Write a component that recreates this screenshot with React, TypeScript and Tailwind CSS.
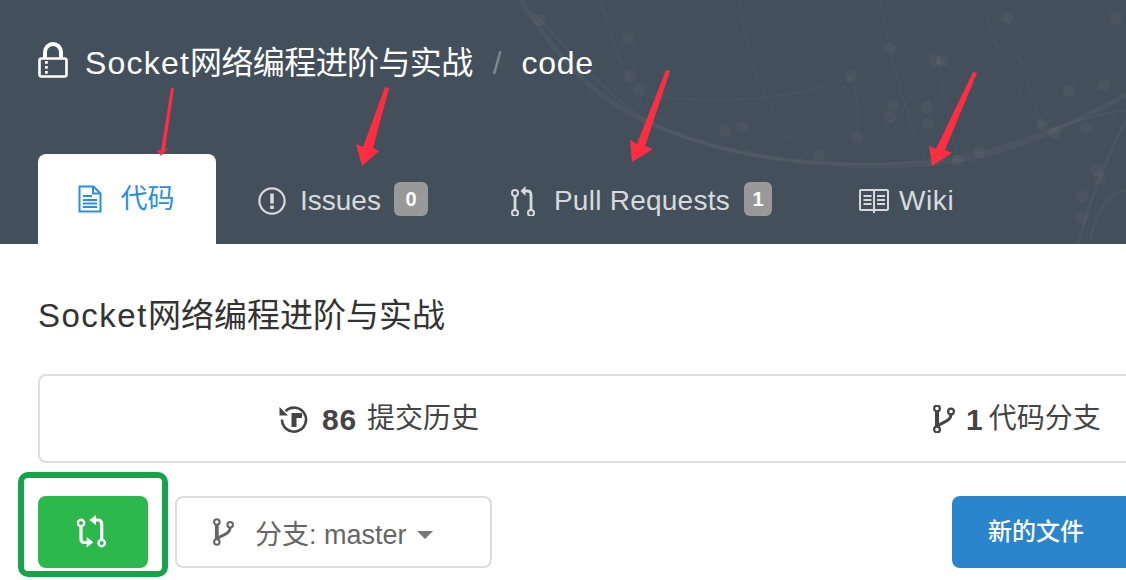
const sans = "font-['Liberation_Sans','Noto_Sans_CJK_SC',sans-serif]";

const dots = [
  [540, 20], [628, 38], [630, 76], [640, 88], [725, 130], [742, 127], [851, 76], [890, 48],
  [935, 61], [942, 61], [893, 105], [890, 117], [927, 107], [928, 124], [857, 137], [818, 155],
  [958, 161], [979, 152], [1042, 125], [1055, 133], [1086, 128], [1069, 91], [1104, 85],
  [1007, 18], [1116, 18], [1096, 170], [1100, 178], [1082, 197], [1082, 218],
];

function Network() {
  return (
    <svg className="absolute inset-0" width="1126" height="244" fill="none" stroke="#fff" strokeOpacity="0.04">
      <path d="M520 0C560 60 600 110 680 135C760 165 880 172 960 160C1020 150 1080 120 1126 95" strokeWidth="5" />
      <path d="M530 10C590 70 620 120 700 142C790 170 900 170 990 150C1050 130 1090 115 1126 110" strokeWidth="2" />
      <path d="M600 0C615 50 630 100 660 120M740 0C745 60 770 120 800 150M880 0C890 50 900 100 925 160M980 0C1000 60 1020 100 1042 125" />
      <path d="M640 95C720 105 800 100 851 76C860 100 858 125 857 137M851 76C830 110 800 135 760 150" />
      <path d="M939 61C915 90 895 125 860 150M939 61C945 100 950 130 958 161M939 61C985 90 1020 110 1042 125M1042 125C1050 100 1065 95 1069 91M1042 125L1104 85M1007 18L1042 125" />
      <path d="M1126 120C1105 160 1090 200 1078 244M1126 190C1110 195 1100 200 1090 240" strokeWidth="3" />
      <g fill="#fff" fillOpacity="0.04" stroke="none">
        {dots.map(([x, y]) => (
          <circle key={`${x}-${y}`} cx={x} cy={y} r="6" />
        ))}
      </g>
    </svg>
  );
}

function Arrows() {
  return (
    <svg className="absolute inset-0 pointer-events-none" width="1126" height="244" fill="#ff2d42">
      <polygon points="171,88 174,88 165,149 168,148 161,156 157,150 161,150" />
      <polygon points="385,87 389,88 373,148 379,151 362,166 356,144 363,147" />
      <polygon points="666,70 670,71 645,146 653,149 632,162 630,140 637,144" />
      <polygon points="973,72 977,73 945,150 952,153 932,166 929,146 936,149" />
    </svg>
  );
}

function LockIcon() {
  return (
    <svg width="30" height="36" viewBox="0 0 30 36" fill="none" className="shrink-0">
      <path d="M7 17V10a8 8 0 0 1 16 0v7" stroke="#fff" strokeWidth="4" />
      <rect x="1.500" y="16.500" width="27" height="18" rx="2" stroke="#fff" strokeWidth="2.600" />
      <path d="M7 19h2.800v2.800H7zM7 24h2.800v2.800H7zM7 29h2.800v2.800H7z" fill="#fff" />
    </svg>
  );
}

function DocIcon() {
  return (
    <svg width="24" height="28" viewBox="0 0 24 28" fill="none" stroke="#2a8fe0" strokeWidth="2">
      <path d="M1.500 1.500h14l7 7v18h-21z" />
      <path d="M15 1.500v7h7.500M5 11h9M5 15h14M5 18.500h14M5 22h14" />
    </svg>
  );
}

function IssueIcon() {
  return (
    <svg width="28" height="28" viewBox="0 0 28 28" fill="none" stroke="#d6dadd" strokeWidth="2.200">
      <circle cx="14" cy="14" r="12.600" />
      <path d="M14 6.500v10" strokeWidth="3.600" />
      <path d="M14 18.600v3.400" strokeWidth="3.600" />
    </svg>
  );
}

function PullIcon() {
  return (
    <svg width="26" height="30" viewBox="0 0 26 30" fill="none" stroke="#d6dadd" strokeWidth="2">
      <circle cx="4" cy="7" r="3" />
      <circle cx="4" cy="27" r="3" />
      <circle cx="20" cy="27" r="3" />
      <path d="M4 10v14M20 24V9q0-4-4-4h-2" strokeWidth="2.800" />
      <path d="M14.500 0v10l-5-5z" fill="#d6dadd" stroke="none" />
    </svg>
  );
}

function BookIcon() {
  return (
    <svg width="30" height="24" viewBox="0 0 30 24" fill="none" stroke="#d6dadd" strokeWidth="2">
      <rect x="1" y="1" width="28" height="20" rx="1" />
      <path d="M15 0v24M4.500 7h8M4.500 11h8M4.500 15h8M18 7h8M18 11h8M18 15h8" />
    </svg>
  );
}

function HistoryIcon() {
  return (
    <svg width="29" height="29" viewBox="0 0 29 29" fill="none" stroke="#444" className="overflow-visible">
      <path d="M5.500 6.200A12 12 0 1 1 2 14.500" strokeWidth="2.600" />
      <path d="M-0.500 2v8.500H8z" fill="#444" stroke="none" />
      <path d="M11.500 8h10.500v5h-5.500v9h-5z" fill="#444" stroke="none" />
    </svg>
  );
}

function BranchIcon({ color, width, height }: { color: string; width: number; height: number }) {
  return (
    <svg width={width} height={height} viewBox="0 0 22 28" fill="none" stroke={color} strokeWidth="2.200">
      <circle cx="4" cy="3.500" r="2.900" />
      <circle cx="4" cy="24.500" r="2.900" />
      <circle cx="18" cy="6.500" r="2.900" />
      <path d="M4 6.500v15" strokeWidth="4" />
      <path d="M18 9.500C18 16 10 17 5 20.500" strokeWidth="3" />
    </svg>
  );
}

function CompareIcon() {
  return (
    <svg width="30" height="34" viewBox="0 0 30 34" fill="none" stroke="#fff" strokeWidth="3.200" className="-ml-[2px]">
      <circle cx="4" cy="8" r="3.200" strokeWidth="2.400" />
      <circle cx="24.700" cy="28" r="3.200" strokeWidth="2.400" />
      <path d="M4 11.500V24q0 3.500 3.500 3.500H10M24.700 24.500V9q0-4-4-4H19" />
      <path d="M9.700 22v10.500l6.600-5.200zM19 0v10l-6.700-5z" fill="#fff" stroke="none" />
    </svg>
  );
}

function Badge({ children, className }: { children: React.ReactNode; className: string }) {
  return (
    <span className={`flex h-[34px] items-center justify-center rounded-md bg-[#999] text-[20px] font-bold text-white ${className}`}>
      {children}
    </span>
  );
}

export default function App() {
  return (
    <div className={`relative h-[580px] w-[1126px] overflow-hidden bg-white ${sans}`}>
      <header className="relative h-[244px] bg-[#434f5a]">
        <Network />
        <div className="relative flex h-[154px] items-start pl-[38px] pt-[42px]">
          <LockIcon />
          <h1 className="ml-[17px] flex h-[42px] items-center text-[32px] text-white">
            <span className="tracking-[1.200px]">Socket</span>
            <span className="tracking-[-0.600px]">网络编程进阶与实战</span>
            <span className="ml-[20px] text-[#7b8791]">/</span>
            <span className="ml-[20px] tracking-[0.700px]">code</span>
          </h1>
        </div>
        <nav className="relative flex h-[90px] pl-[38px] text-[28px] text-[#d6dadd]">
          <a className="flex w-[178px] items-center justify-center gap-[19px] rounded-t-lg bg-white pr-[2px] text-[#2a8fe0]">
            <DocIcon />
            <span className="pt-[1px] text-[27px]">代码</span>
          </a>
          <a className="ml-[42px] flex items-center pt-[3px]">
            <IssueIcon />
            <span className="ml-[14px]">Issues</span>
            <span className="-mt-[3px] ml-[13px]">
              <Badge className="w-[34px]">0</Badge>
            </span>
          </a>
          <a className="ml-[83px] flex items-center pt-[3px]">
            <PullIcon />
            <span className="ml-[17px] tracking-[0.250px]">Pull Requests</span>
            <span className="-mt-[3px] ml-[14px]">
              <Badge className="w-[28px]">1</Badge>
            </span>
          </a>
          <a className="ml-[87px] flex items-center pt-[3px]">
            <BookIcon />
            <span className="ml-[10px] tracking-[0.600px]">Wiki</span>
          </a>
        </nav>
        <Arrows />
      </header>

      <main className="pl-[38px]">
        <h2 className="flex h-[130px] items-center pt-[13px] text-[33px] text-[#333]">
          <span className="tracking-[1.500px]">Socket</span>
          <span>网络编程进阶与实战</span>
        </h2>
        <div className="flex h-[89px] w-[1400px] items-center rounded-lg border-2 border-[#ddd] pt-[1px] text-[28px] text-[#444]">
          <div className="ml-[240px] flex items-center">
            <HistoryIcon />
            <span className="ml-[13px] text-[30px] font-bold tracking-[0.800px]">86</span>
            <span className="ml-[10px]">提交历史</span>
          </div>
          <div className="ml-[454px] flex items-center">
            <BranchIcon color="#444" width={22} height={28} />
            <span className="ml-[11px] text-[30px] font-bold">1</span>
            <span className="ml-[6px]">代码分支</span>
          </div>
        </div>
        <div className="mt-[33px] flex h-[72px] w-[1400px] items-stretch">
          <button className="flex w-[110px] shrink-0 items-center justify-center rounded-lg bg-[#2cb84c]">
            <CompareIcon />
          </button>
          <button className="ml-[27px] flex w-[317px] shrink-0 items-center rounded-lg border-2 border-[#ddd] pl-[36px] text-[27px] text-[#666]">
            <BranchIcon color="#666" width={21} height={28} />
            <span className="ml-[21px] pt-[6px]">分支: master</span>
            <span className="ml-[10px] mt-[6px] h-0 w-0 border-x-[8px] border-t-[8px] border-x-transparent border-t-[#777]" />
          </button>
          <button className="ml-[460px] w-[220px] shrink-0 rounded-lg bg-[#2a85cd] pl-[36px] text-left text-[24px] font-medium text-white">
            新的文件
          </button>
        </div>
      </main>

      <div className="absolute left-[18px] top-[472px] h-[105px] w-[150px] rounded-[10px] border-[6px] border-[#16a34a]" />
    </div>
  );
}
